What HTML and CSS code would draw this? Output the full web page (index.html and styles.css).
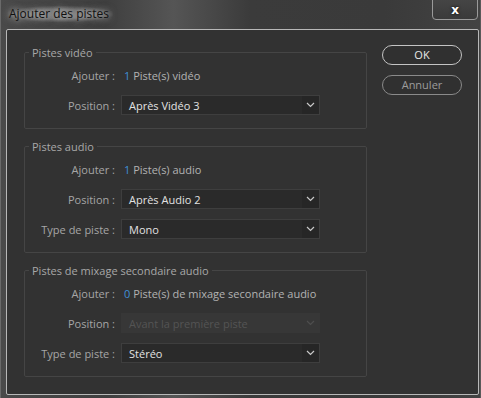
FILE: index.html
```html
<!DOCTYPE html>
<html lang="fr">
  <head>
    <meta charset="UTF-8" />
    <title>Ajouter des pistes</title>
    <link rel="stylesheet" href="styles.css">
  </head>
  <body>
    <div class="window">
      <div class="titlebar">
        <span class="title">Ajouter des pistes</span>
        <button class="close" type="button">x</button>
      </div>
      <div class="client">
        <div class="groups">
          <fieldset class="group">
            <legend>Pistes vidéo</legend>
            <div class="row">
              <span class="label">Ajouter :</span>
              <span class="value"><span class="count">1</span> Piste(s) vidéo</span>
            </div>
            <div class="row">
              <span class="label">Position :</span>
              <div class="select">
                <span>Après Vidéo 3</span>
                <span class="chev"><svg width="9" height="6" viewBox="0 0 9 6"><polyline points="1,1 4.5,4.5 8,1" /></svg></span>
              </div>
            </div>
          </fieldset>

          <fieldset class="group">
            <legend>Pistes audio</legend>
            <div class="row">
              <span class="label">Ajouter :</span>
              <span class="value"><span class="count">1</span> Piste(s) audio</span>
            </div>
            <div class="row">
              <span class="label">Position :</span>
              <div class="select">
                <span>Après Audio 2</span>
                <span class="chev"><svg width="9" height="6" viewBox="0 0 9 6"><polyline points="1,1 4.5,4.5 8,1" /></svg></span>
              </div>
            </div>
            <div class="row">
              <span class="label">Type de piste :</span>
              <div class="select">
                <span>Mono</span>
                <span class="chev"><svg width="9" height="6" viewBox="0 0 9 6"><polyline points="1,1 4.5,4.5 8,1" /></svg></span>
              </div>
            </div>
          </fieldset>

          <fieldset class="group">
            <legend>Pistes de mixage secondaire audio</legend>
            <div class="row">
              <span class="label">Ajouter :</span>
              <span class="value"><span class="count">0</span> Piste(s) de mixage secondaire audio</span>
            </div>
            <div class="row">
              <span class="label">Position :</span>
              <div class="select disabled">
                <span>Avant la première piste</span>
                <span class="chev"><svg width="9" height="6" viewBox="0 0 9 6"><polyline points="1,1 4.5,4.5 8,1" /></svg></span>
              </div>
            </div>
            <div class="row">
              <span class="label">Type de piste :</span>
              <div class="select">
                <span>Stéréo</span>
                <span class="chev"><svg width="9" height="6" viewBox="0 0 9 6"><polyline points="1,1 4.5,4.5 8,1" /></svg></span>
              </div>
            </div>
          </fieldset>
        </div>
        <div class="buttons">
          <button class="btn ok" type="button">OK</button>
          <button class="btn cancel" type="button">Annuler</button>
        </div>
      </div>
    </div>
  </body>
</html>
```

FILE: styles.css
```css
html {
  font-family: "Open Sans", sans-serif;
}
body {
  margin: 0;
  padding: 0;
  background: #3a3a3a;
}
.window {
  width: 481px;
  height: 398px;
  display: flex;
  flex-direction: column;
  box-sizing: border-box;
  border-left: 1px solid #6a6a6a;
  border-right: 1px solid #5a5a5a;
  background: linear-gradient(90deg, #4a4a4a 0%, #3f3f3f 22%, #555 36%, #3b3b3b 52%, #3a3a3a 80%, #434343 100%);
}
.titlebar {
  height: 29px;
  display: flex;
  justify-content: space-between;
  align-items: flex-start;
  padding-left: 7px;
  padding-right: 2px;
}
.title {
  margin-top: 6px;
  padding: 0 4px 0 1px;
  font-size: 12px;
  line-height: 16px;
  color: #111;
  background: radial-gradient(ellipse at center, rgba(150, 150, 150, 0.55) 40%, rgba(150, 150, 150, 0) 75%);
  text-shadow: 0 0 6px rgba(230, 230, 230, 0.8), 0 0 10px rgba(200, 200, 200, 0.6);
}
.close {
  width: 46px;
  height: 21px;
  margin-top: -1px;
  border: 1px solid #9a9a9a;
  border-radius: 0 0 4px 4px;
  background: linear-gradient(#454545, #3a3a3a);
  color: #fff;
  font-family: "DejaVu Sans", sans-serif;
  font-weight: 700;
  font-size: 12px;
  line-height: 16px;
  padding: 0;
  text-shadow: 0 0 3px #000;
}
.client {
  flex: 1;
  margin: 0 1px 3px 5px;
  border: 1px solid #b8b8b8;
  border-radius: 2px;
  background: #323232;
  display: flex;
  gap: 15px;
  padding: 15px 0 0 17px;
}
.groups {
  display: flex;
  flex-direction: column;
  gap: 10px;
}
.group {
  margin: 0;
  width: 343px;
  box-sizing: border-box;
  padding: 0 46px 8px 0;
  border: 1px solid #454545;
  border-radius: 2px;
}
.group legend {
  margin-left: 4px;
  padding: 0 3px;
  font-size: 11px;
  line-height: 15px;
  color: #a8a8a8;
}
.row {
  height: 30px;
  display: flex;
  align-items: center;
  gap: 6px;
  font-size: 11px;
}
.label {
  width: 90px;
  text-align: right;
  color: #a6a6a6;
}
.value {
  padding-left: 3px;
  color: #b2b2b2;
}
.count {
  color: #3f8fd6;
}
.select {
  flex: 1;
  height: 20px;
  box-sizing: border-box;
  display: flex;
  justify-content: space-between;
  align-items: center;
  padding-left: 7px;
  background: #2a2a2a;
  border: 1px solid #3e3e3e;
  color: #e2e2e2;
}
.chev {
  width: 17px;
  height: 18px;
  display: flex;
  align-items: center;
  justify-content: center;
  background: #262626;
}
.chev polyline {
  fill: none;
  stroke: #c8c8c8;
  stroke-width: 1.2;
}
.select.disabled {
  background: #373737;
  border-color: #373737;
  color: #545454;
}
.select.disabled .chev {
  background: #373737;
}
.select.disabled polyline {
  stroke: #4e4e4e;
}
.buttons {
  display: flex;
  flex-direction: column;
  gap: 10px;
}
.btn {
  width: 80px;
  height: 20px;
  border-radius: 10px;
  background: #303030;
  font-family: "Open Sans", sans-serif;
  font-size: 11px;
  padding: 0;
  line-height: 16px;
}
.ok {
  border: 1.5px solid #c4c4c4;
  color: #e8e8e8;
}
.cancel {
  border: 1.5px solid #8a8a8a;
  color: #9c9c9c;
}
```
